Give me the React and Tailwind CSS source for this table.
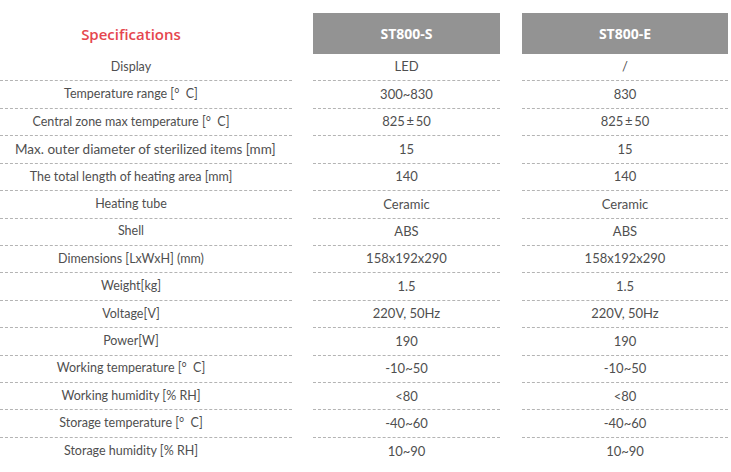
const rows = [
  ["Display", "LED", "/"],
  ["Temperature range [°  C]", "300~830", "830"],
  ["Central zone max temperature [°  C]", "825\u2009±\u200950", "825\u2009±\u200950"],
  ["Max. outer diameter of sterilized items [mm]", "15", "15"],
  ["The total length of heating area [mm]", "140", "140"],
  ["Heating tube", "Ceramic", "Ceramic"],
  ["Shell", "ABS", "ABS"],
  ["Dimensions [LxWxH] (mm)", "158x192x290", "158x192x290"],
  ["Weight[kg]", "1.5", "1.5"],
  ["Voltage[V]", "220V, 50Hz", "220V, 50Hz"],
  ["Power[W]", "190", "190"],
  ["Working temperature [°  C]", "-10~50", "-10~50"],
  ["Working humidity [% RH]", "<80", "<80"],
  ["Storage temperature [°  C]", "-40~60", "-40~60"],
  ["Storage humidity [% RH]", "10~90", "10~90"],
];

function Cell({ w, last, children }) {
  return (
    <div
      className={`${w} h-full flex items-center justify-center whitespace-pre text-[13px] ${
        last ? "" : "border-b border-dashed border-[#b4b4b4]"
      }`}
    >
      {children}
    </div>
  );
}

export default function App() {
  return (
    <div
      className="w-[731px] h-[472px] bg-white pt-[13px] text-[#4f4f4f] text-[12.5px]"
      style={{ fontFamily: 'Lato, "Open Sans", sans-serif' }}
    >
      <div className="flex gap-[21px] h-[41px]">
        <div
          className="w-[292px] pl-[15px] pr-[45px] flex items-center justify-center text-[15px] font-semibold text-[#e5464e] pt-[1px]"
          style={{ fontFamily: '"Open Sans", sans-serif' }}
        >
          Specifications
        </div>
        <div
          className="w-[187px] bg-[#939393] flex items-center justify-center text-white font-bold text-[14px]"
          style={{ fontFamily: '"Open Sans", sans-serif' }}
        >
          ST800-S
        </div>
        <div
          className="w-[206px] ml-[1px] bg-[#939393] flex items-center justify-center text-white font-bold text-[14px]"
          style={{ fontFamily: '"Open Sans", sans-serif' }}
        >
          ST800-E
        </div>
      </div>
      {rows.map((r, i) => {
        const last = i === rows.length - 1;
        return (
          <div key={i} className="flex gap-[21px] h-[27.43px]">
            <div
              className={`w-[292px] h-full pl-[15px] pr-[45px] flex items-center whitespace-pre ${
                last ? "" : "border-b border-dashed border-[#b4b4b4]"
              }`}
            >
              <div className={`w-full text-center ${i === 3 ? "text-[13.5px]" : ""}`}>{r[0]}</div>
            </div>
            <Cell w="w-[187px]" last={last}>{r[1]}</Cell>
            <div className="w-[1px]" />
            <Cell w="w-[206px] -ml-[21px]" last={last}>{r[2]}</Cell>
          </div>
        );
      })}
    </div>
  );
}
